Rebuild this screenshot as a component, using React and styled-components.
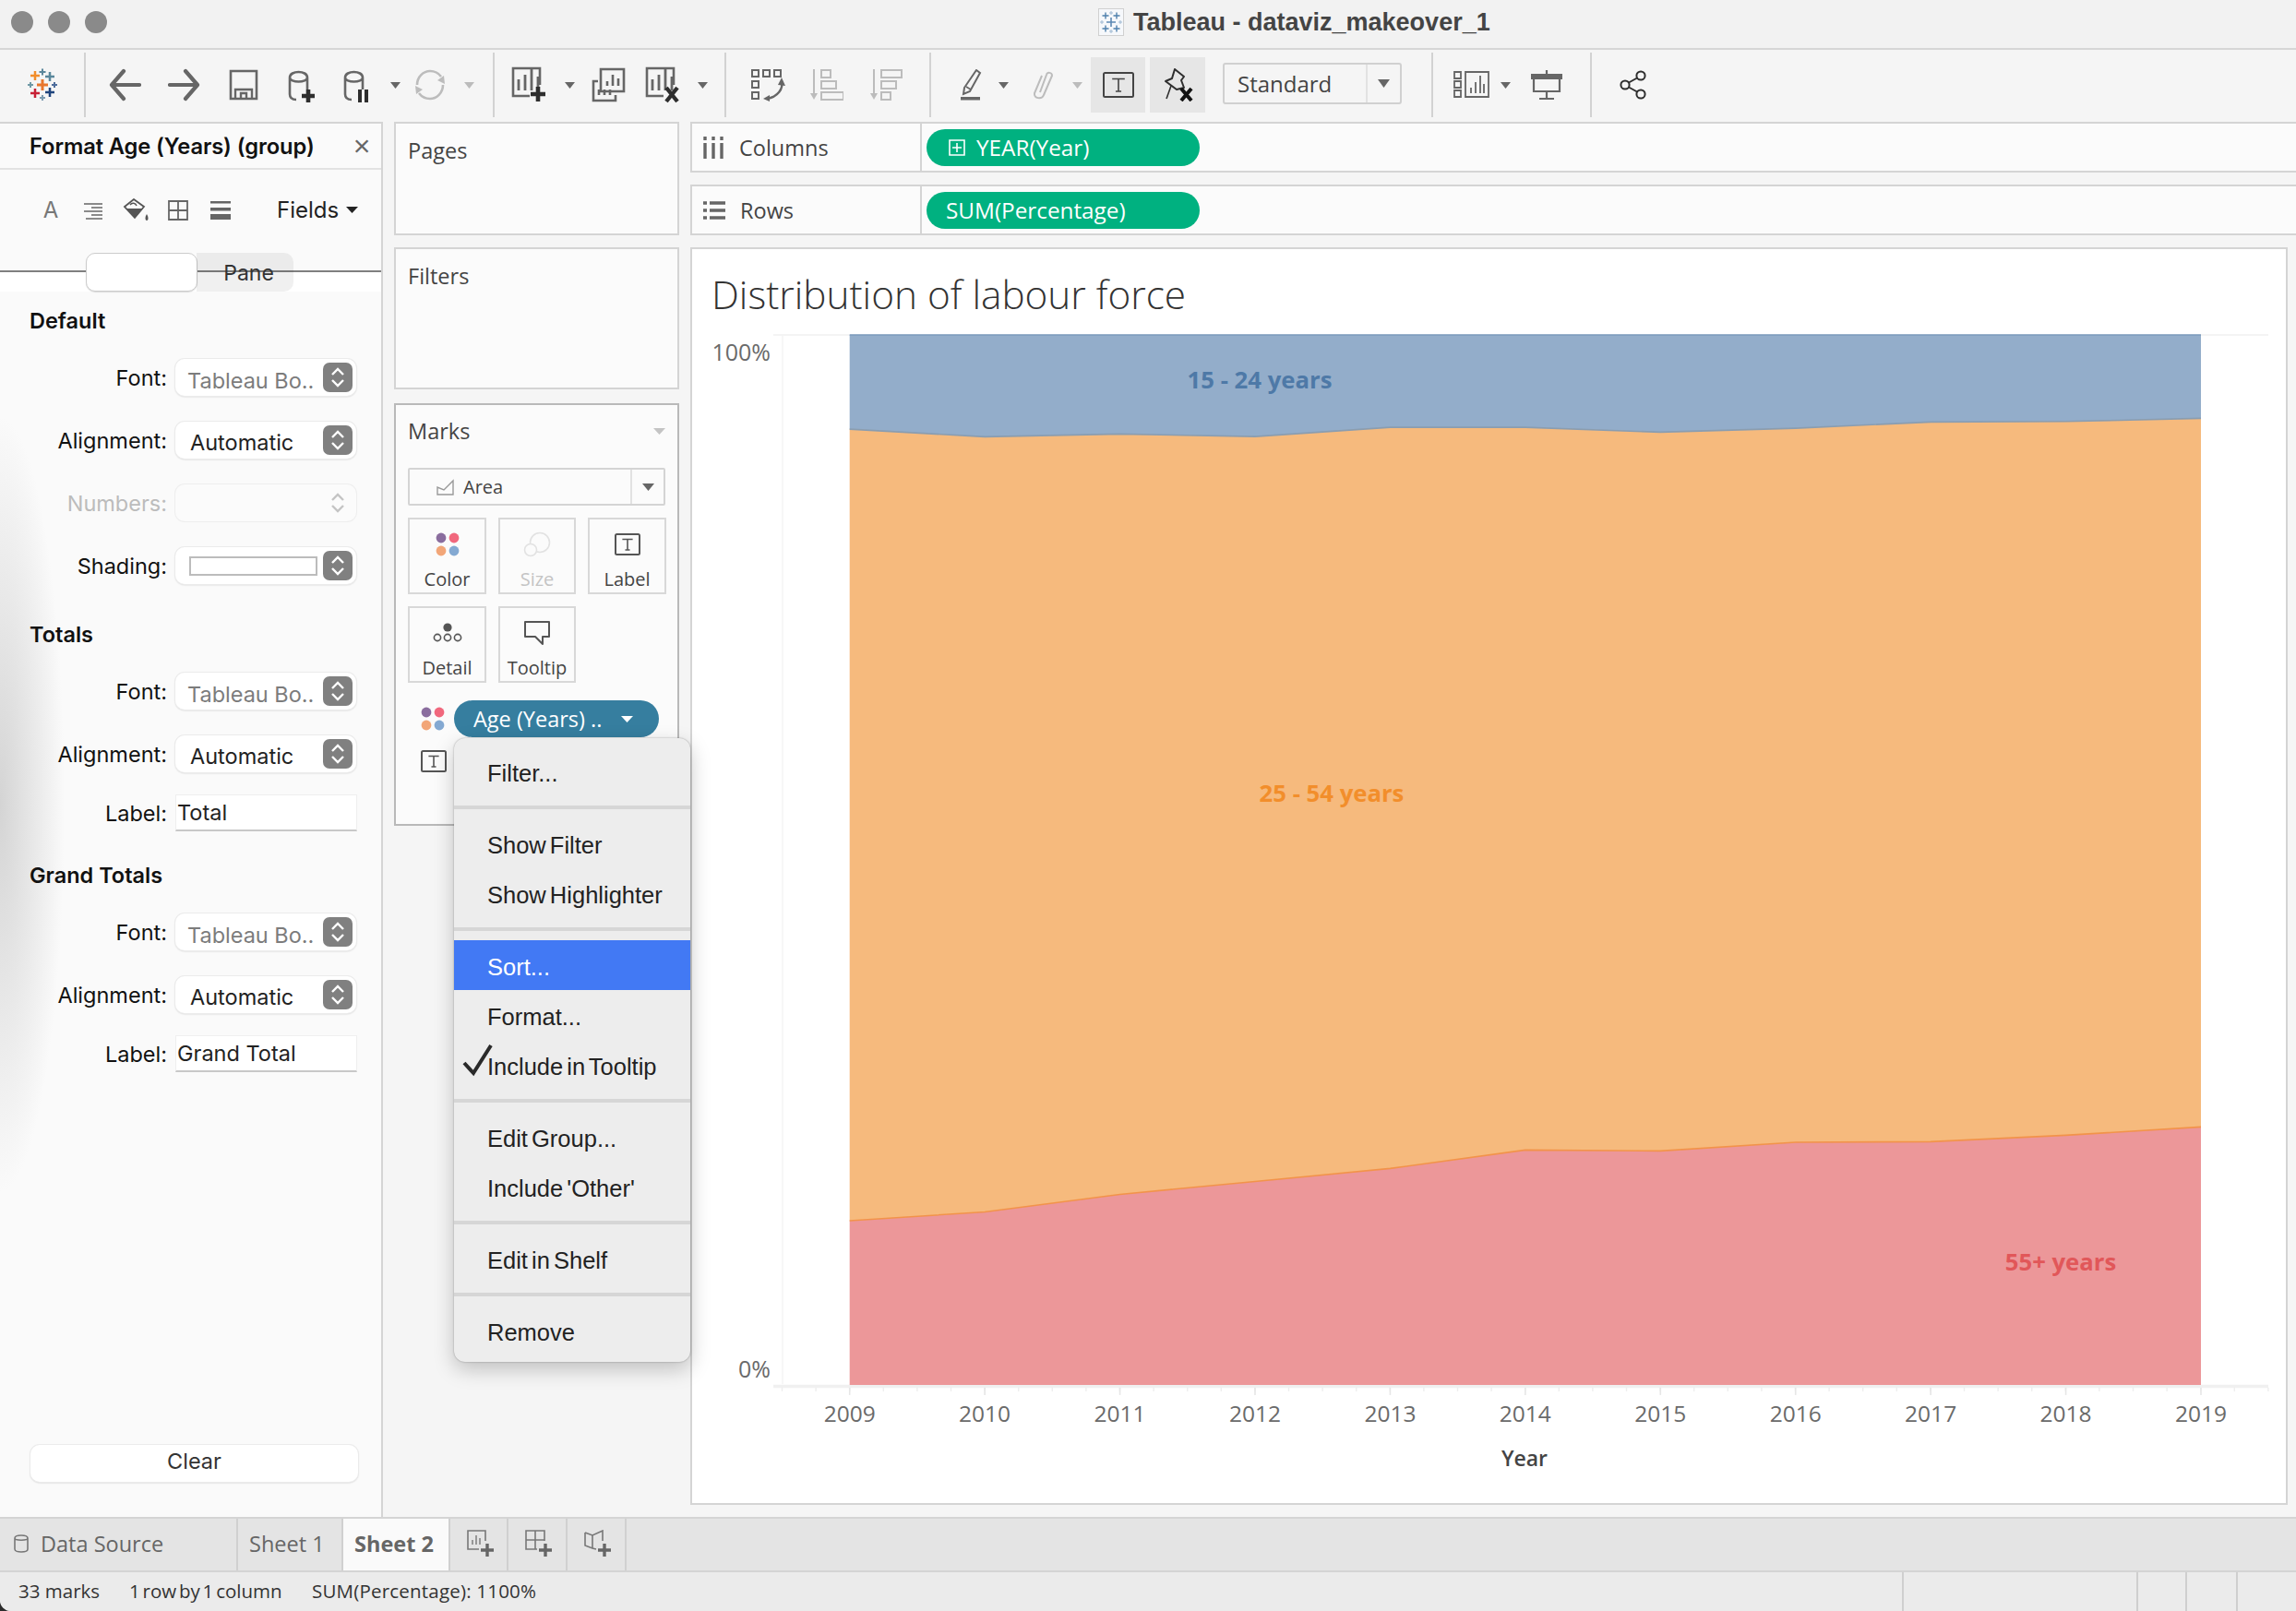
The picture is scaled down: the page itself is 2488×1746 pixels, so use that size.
import React from 'react';
import styled, { createGlobalStyle } from 'styled-components';

const UI = `'Inter', 'Liberation Sans', sans-serif`;
const TB = `'Open Sans', 'Noto Sans', sans-serif`;

const Global = createGlobalStyle`
  html, body { margin: 0; padding: 0; background: #2c2c2c; }
  * { box-sizing: border-box; }
`;
const Page = styled.div`
  width: 2488px; height: 1746px; display: flex; flex-direction: column; overflow: hidden;
  background: #f5f5f5; border-bottom-left-radius: 12px; font-family: ${TB}; color: #333;
`;
const TitleBar = styled.div`
  height: 54px; flex: none; display: flex; align-items: center; background: #f2f2f2;
  border-bottom: 2px solid #d6d6d6; padding: 0 0 4px 12px;
`;
const Light = styled.span`
  width: 24px; height: 24px; border-radius: 50%; background: #8a8a8a; margin-right: 16px; flex: none;
`;
const WindowTitle = styled.div`
  margin-left: 1058px; display: flex; align-items: center; gap: 10px;
  font: 700 27px 'Liberation Sans', sans-serif; color: #444;
`;
const Toolbar = styled.div`
  height: 78px; flex: none; display: flex; align-items: center; background: #f5f5f5; padding-bottom: 2px;
`;
const Sep = styled.div`
  width: 2px; height: 70px; background: #d2d2d2; flex: none;
`;
const Slot = styled.div`
  width: ${p => p.$w}px; height: 60px; flex: none; display: flex; align-items: center; justify-content: center;
  background: ${p => (p.$on ? '#e6e6e6' : 'transparent')};
  margin-left: ${p => p.$ml || 0}px;
`;
const StandardSelect = styled.div`
  width: 194px; height: 45px; margin: -3px 0 0 19px; flex: none; display: flex; border: 2px solid #d0d0d0; border-radius: 3px;
  font: 400 24px ${TB}; color: #444; align-items: center;
`;
const StandardValue = styled.div` flex: 1; padding-left: 14px; `;
const StandardArrow = styled.div`
  width: 37px; height: 100%; border-left: 2px solid #e2e2e2; display: flex; align-items: center; justify-content: center;
`;
const Main = styled.div`
  flex: 1; min-height: 0; display: flex; overflow: hidden;
`;
const FormatPanel = styled.aside`
  width: 415px; flex: none; display: flex; flex-direction: column; border-right: 2px solid #d4d4d4; border-top: 2px solid #d4d4d4;
  background: radial-gradient(ellipse 70px 420px at 0 738px, #d4d4d4, rgba(250,250,250,0) 100%), #fafafa;
  font-family: ${UI}; color: #111;
`;
const PanelHead = styled.div`
  height: 50px; flex: none; display: flex; align-items: center; justify-content: space-between; padding: 0 9px 0 32px;
  border-bottom: 2px solid #e2e2e2; font-size: 23.7px; font-weight: 600; letter-spacing: -.1px;
`;
const Close = styled.span`
  font: 400 32px 'Liberation Sans', sans-serif; color: #666; width: 24px; text-align: center;
`;
const FormatTools = styled.div`
  height: 90px; flex: none; display: flex; align-items: center; padding: 0 0 3px 32px;
`;
const FormatTool = styled.div`
  width: 46px; display: flex; align-items: center; justify-content: center; color: #777; font: 400 24px ${UI};
`;
const FieldsBtn = styled.div`
  margin-left: 38px; display: flex; align-items: center; gap: 8px; font: 400 24px ${UI}; color: #222;
`;
const TabRow = styled.div`
  height: 42px; flex: none; display: flex; padding-left: 93px;
  background: linear-gradient(#fafafa 0 19px, #808080 19px 21px, #fff 21px 100%);
`;
const ActiveSeg = styled.div`
  width: 121px; background: #fff; border: 1px solid #ccc; border-radius: 10px; box-shadow: 0 1px 1px rgba(0,0,0,.12);
`;
const PaneSeg = styled.div`
  width: 105px; margin-left: -1px; background: rgba(0,0,0,.06); border-radius: 0 10px 10px 0; text-align: center;
  font: 400 23px/44px ${UI}; color: #333; padding-left: 8px;
`;
const Sections = styled.div`
  flex: 1; display: flex; flex-direction: column; padding: 17px 26px 38px 32px;
`;
const SectionHead = styled.div`
  height: 30px; flex: none; margin-top: ${p => p.$mt || 0}px; margin-bottom: 26px; line-height: 30px;
  font-size: 23.5px; font-weight: 600; color: #111;
`;
const Row = styled.div`
  height: 40px; flex: none; display: flex; align-items: center; margin-bottom: ${p => p.$mb ?? 28}px;
`;
const RowLabel = styled.div`
  width: 149px; text-align: right; font-size: 23.5px; color: ${p => (p.$off ? '#bcbcbc' : '#111')}; flex: none; margin-right: 9px;
`;
const Select = styled.div`
  width: 196px; height: 40px; flex: none; display: flex; align-items: center; justify-content: space-between;
  padding: 0 4px 0 ${p => p.$pl || 17}px; border-radius: 10px; background: #fff; box-shadow: 0 0 0 1px #ebebeb, 0 1px 2px rgba(0,0,0,.22);
  ${p => p.$off && 'box-shadow: 0 0 0 1px #eee; background: #fbfbfb;'}
`;
const SelectText = styled.span`
  font-size: 23.5px; color: ${p => (p.$dim ? '#7c7c7c' : '#222')}; white-space: nowrap; padding-top: ${p => (p.$dim ? 6 : 4)}px;
  margin-left: ${p => (p.$dim ? -4 : -1)}px;
`;
const Stepper = styled.span`
  width: 32px; height: 32px; border-radius: 7px; flex: none; display: flex; align-items: center; justify-content: center;
  background: ${p => (p.$off ? 'transparent' : '#808080')};
`;
const Swatch = styled.span`
  width: 139px; height: 21px; border: 2px solid #bcbcbc; background: #fff; margin-left: -1px;
`;
const TextField = styled.div`
  width: 197px; height: 40px; flex: none; background: #fff; padding-left: 1px; line-height: 38px; font-size: 23.5px; color: #222;
  border: 1px solid #efefef; border-bottom: 2px solid #c8c8c8;
`;
const ClearBtn = styled.div`
  margin: auto 0 0 1px; height: 40px; flex: none; width: 355px; border-radius: 10px; background: #fff; text-align: center; line-height: 36px;
  font-size: 23.5px; color: #333; box-shadow: 0 0 0 1px #ebebeb, 0 1px 2px rgba(0,0,0,.25);
`;
const ShelfCol = styled.div`
  width: 309px; flex: none; margin: 0 12px 0 12px; display: flex; flex-direction: column;
`;
const Card = styled.div`
  height: ${p => p.$h}px; flex: none; background: #fbfbfb; border: 2px solid ${p => p.$dark ? '#b9b9b9' : '#d4d4d4'};
  margin-bottom: ${p => p.$mb || 0}px; padding: ${p => p.$pad || '0 13px'};
  font: 400 23.5px ${TB}; color: #444;
`;
const CardTitle = styled.div` line-height: 40px; padding-top: 9px; `;
const MarksHead = styled.div`
  display: flex; justify-content: space-between; align-items: center; height: 56px; margin-bottom: 12px;
`;
const MarkType = styled.div`
  height: 41px; width: 279px; border: 2px solid #d4d4d4; display: flex; align-items: center; font-size: 20px; color: #444; border-radius: 2px;
`;
const MarkTypeIcon = styled.span` width: 58px; display: flex; justify-content: flex-end; padding-right: 9px; `;
const MarkTypeText = styled.span` flex: 1; `;
const MarkTypeArrow = styled.span`
  width: 36px; height: 100%; border-left: 2px solid #e2e2e2; display: flex; align-items: center; justify-content: center;
`;
const MarkGrid = styled.div`
  display: grid; grid-template-columns: 85px 84px 85px; column-gap: 13px; row-gap: 13px; margin-top: 13px; width: 279px;
`;
const MarkBtn = styled.div`
  height: 83px; border: 2px solid #d8d8d8; display: flex; flex-direction: column; align-items: center; justify-content: flex-start;
  font-size: 20px; color: ${p => (p.$off ? '#c4c4c4' : '#444')}; 
`;
const MarkIcon = styled.div` height: 51px; display: flex; align-items: center; justify-content: center; padding-top: 2px;`;
const PillRow = styled.div`
  display: flex; align-items: center; margin-top: ${p => p.$mt}px; height: 40px;
`;
const PillIcon = styled.div` width: 50px; padding-left: 14px; flex: none; display: flex; align-items: center; `;
const AgePill = styled.div`
  width: 222px; height: 40px; border-radius: 20px; background: #367e9f; color: #fff; display: flex; align-items: center; justify-content: space-between;
  padding: 0 28px 0 21px; font-size: 23.5px;
`;
const ViewCol = styled.div`
  flex: 1; min-width: 0; display: flex; flex-direction: column; padding: 0 9px 13px 0;
`;
const Shelf = styled.div`
  height: 55px; flex: none; width: calc(100% + 20px); display: flex; align-items: center; border: 2px solid #d4d4d4; background: #fbfbfb; margin-bottom: 13px;
`;
const ShelfLabel = styled.div`
  width: 249px; height: 100%; flex: none; display: flex; align-items: center; gap: ${p => p.$gap}px; padding-left: 12px; border-right: 2px solid #d4d4d4;
  font: 400 23.5px ${TB}; color: #444;
`;
const GreenPill = styled.div`
  width: 296px; height: 40px; margin-left: 5px; border-radius: 20px; background: #00b180; color: #fff; display: flex; align-items: center; gap: 12px;
  padding-left: ${p => p.$pl}px; font: 400 24.3px ${TB};
`;
const ViewCard = styled.div`
  flex: 1; min-height: 0; background: #fff; border: 2px solid #d4d4d4; display: flex; flex-direction: column;
`;
const ViewTitle = styled.div`
  height: 74px; flex: none; padding: 26px 0 0 21px; font: 300 42.3px/46px ${TB}; color: #333;
`;
const ChartSvg = styled.svg`
  display: block; flex: 1; min-height: 0; width: 100%; font-family: ${TB};
`;
const Menu = styled.div`
  position: absolute; left: 492px; top: 800px; width: 256px; height: 676px; padding: 9px 0 8px; background: #ededed; border-radius: 12px;
  box-shadow: 0 0 2px rgba(0,0,0,.35), 0 8px 22px rgba(0,0,0,.22); font: 400 25.5px 'Liberation Sans', sans-serif; color: #222;
`;
const MenuItem = styled.div`
  height: 54px; padding: 5px 0 0 36px; line-height: 48px; position: relative; word-spacing: -3px; white-space: nowrap;
  background: ${p => (p.$sel ? '#4279f4' : 'transparent')}; color: ${p => (p.$sel ? '#fff' : 'inherit')};
`;
const MenuSep = styled.div` height: 4px; margin: 10px 0; background: #d6d6d6; `;
const Check = styled.svg` position: absolute; left: 9px; top: 3px; `;
const Tabs = styled.div`
  height: 60px; flex: none; display: flex; align-items: stretch; background: #e4e4e4; border-top: 2px solid #d4d4d4; border-bottom: 2px solid #d4d4d4;
  font: 400 23.5px ${TB}; color: #666;
`;
const Tab = styled.div`
  width: ${p => p.$w}px; flex: none; display: flex; align-items: center; padding: 0 0 2px ${p => p.$pl || 0}px; gap: 13px;
  justify-content: ${p => (p.$c ? 'center' : 'flex-start')}; border-right: 2px solid #d0d0d0;
  background: ${p => (p.$on ? '#fafafa' : 'transparent')}; font-weight: ${p => (p.$on ? 700 : 400)};
`;
const Status = styled.div`
  height: 42px; flex: none; display: flex; align-items: stretch; background: #ebebeb; font: 400 20.5px ${TB}; color: #333;
`;
const StatusText = styled.div`
  width: ${p => p.$w}px; flex: none; display: flex; align-items: center; padding: 0 0 2px ${p => p.$pl || 0}px; white-space: pre;
  word-spacing: ${p => p.$ws || 0}px; letter-spacing: ${p => p.$ls || 0}px;
`;
const StatusCell = styled.div`
  width: ${p => p.$w}px; flex: none; border-left: 2px solid #cfcfcf;
`;

const Ic = ({ w = 40, h = 40, children, ...r }) => (
  <svg width={w} height={h} viewBox={`0 0 ${w} ${h}`} fill="none" {...r}>{children}</svg>
);
const G = '#666', D = '#2e2e2e', L = '#bcbcbc';
const Caret = ({ c = G, w = 11, h = 7 }) => <Ic w={w} h={h}><path d={`M0 0H${w}L${w / 2} ${h}Z`} fill={c} /></Ic>;
const Cross = ({ x, y, s, c, t = 3 }) => (
  <path d={`M${x - s} ${y}H${x + s}M${x} ${y - s}V${y + s}`} stroke={c} strokeWidth={t} />
);
const Logo = () => (
  <Ic w={36} h={44}>
    <Cross x={18} y={22} s={6} c="#e8762d" t={3} />
    <Cross x={10} y={12} s={5} c="#f28e2b" t={2.5} />
    <Cross x={18} y={8} s={3.5} c="#5b879b" t={2} />
    <Cross x={26} y={13} s={5} c="#59879b" t={2.5} />
    <Cross x={5} y={22} s={3} c="#7099a6" t={2} />
    <Cross x={31} y={22} s={3} c="#4e6d9c" t={2} />
    <Cross x={10} y={31} s={5} c="#c72035" t={2.5} />
    <Cross x={26} y={30} s={5} c="#1f447d" t={2.5} />
    <Cross x={18} y={36} s={3} c="#7c9bb0" t={2} />
  </Ic>
);
const SmallLogo = () => (
  <Ic w={28} h={30}>
    <rect x=".5" y=".5" width="27" height="29" fill="#f6f8fb" stroke="#d0d0d0" />
    <Cross x={14} y={15} s={5} c="#5e89b4" t={1.6} />
    <Cross x={8} y={8} s={3.5} c="#4f80ad" t={1.4} />
    <Cross x={20} y={8} s={3.5} c="#4f80ad" t={1.4} />
    <Cross x={8} y={22} s={3.5} c="#4f80ad" t={1.4} />
    <Cross x={20} y={22} s={3.5} c="#4f80ad" t={1.4} />
    <Cross x={14} y={5} s={2} c="#9fb9d2" t={1} />
    <Cross x={14} y={25} s={2} c="#9fb9d2" t={1} />
    <Cross x={4} y={15} s={2} c="#9fb9d2" t={1} />
    <Cross x={24} y={15} s={2} c="#9fb9d2" t={1} />
  </Ic>
);
const Arrow = ({ flip }) => (
  <Ic w={36} h={36} style={flip ? { transform: 'scaleX(-1)' } : undefined}>
    <path d="M17 3L4 18L17 33M4 18H34" stroke={G} strokeWidth="4.2" strokeLinecap="round" strokeLinejoin="round" />
  </Ic>
);
const Save = () => (
  <Ic w={32} h={34}>
    <path d="M2 2H30V32H2Z" stroke={G} strokeWidth="2.6" />
    <path d="M7 32V22H25V32M13 32V26H19V32" stroke={G} strokeWidth="2.4" />
  </Ic>
);
const Cyl = () => <path d="M7 11C7 3 26 3 26 11V24M7 11C7 17 26 17 26 11M7 11V29C7 33 10 35 14 35" stroke={G} strokeWidth="2.6" />;
const DbPlus = () => (
  <Ic w={36} h={38}><Cyl /><path d="M27 24V38M20 31H34" stroke={D} strokeWidth="4.6" /></Ic>
);
const DbPause = () => (
  <Ic w={36} h={38}><Cyl /><path d="M23 24V38M30 24V38" stroke={D} strokeWidth="4" /></Ic>
);
const Refresh = () => (
  <Ic w={36} h={36}>
    <path d="M4 18C4 9 11 3 18 3C23 3 27 5 30 9M32 18C32 27 25 33 18 33C13 33 9 31 6 27" stroke={L} strokeWidth="2.6" />
    <path d="M26 13L33 8L34 17ZM10 23L3 28L2 19Z" fill={L} />
  </Ic>
);
const Bars = ({ x = 0, y = 0, c = G, k = 1 }) => (
  <path transform={`translate(${x} ${y}) scale(${k})`} d="M0 0V12M7 -5V12M14 -12V12M21 -3V12" stroke={c} strokeWidth="2.8" />
);
const NewSheet = () => (
  <Ic w={40} h={40}>
    <path d="M20 32H2V2H31V20" stroke={G} strokeWidth="2.6" />
    <Bars x={8} y={14} />
    <path d="M29 22V38M21 30H37" stroke={D} strokeWidth="4.6" />
  </Ic>
);
const DupSheet = () => (
  <Ic w={38} h={38}>
    <path d="M10 2H35V26H10Z" stroke={G} strokeWidth="2.6" />
    <path d="M7 15H2V36H26V30" stroke={G} strokeWidth="2.6" />
    <path d="M17 15V20M23 8V20M29 12V20M8 24V30M14 24V30M20 30V24" stroke={G} strokeWidth="2.6" />
  </Ic>
);
const ClearSheet = () => (
  <Ic w={40} h={40}>
    <path d="M20 32H2V2H31V20" stroke={G} strokeWidth="2.6" />
    <Bars x={8} y={14} />
    <path d="M23 23L35 38M35 23L23 38" stroke={D} strokeWidth="4.4" />
  </Ic>
);
const SwapAxes = () => (
  <Ic w={38} h={36}>
    <path d="M2 2H9V9H2ZM14 2H21V9H14ZM26 2H33V9H26ZM2 14H9V21H2ZM2 26H9V33H2Z" stroke={G} strokeWidth="2" />
    <path d="M34 14C36 22 30 31 18 33" stroke={G} strokeWidth="2.4" />
    <path d="M34 10L38 19L30 18ZM14 33L21 29L21 36Z" fill={G} />
  </Ic>
);
const SortIc = ({ desc }) => (
  <Ic w={36} h={36}>
    <path d="M4 1V30" stroke={L} strokeWidth="2" />
    <path d="M0 27H8L4 34Z" fill={L} />
    {(desc ? [[12, 22], [12, 16], [12, 10]] : [[12, 10], [12, 16], [12, 24]]).map(([x, w], i) => (
      <rect key={i} x={x} y={2 + i * 12} width={w} height={8} stroke={L} strokeWidth="2" />
    ))}
  </Ic>
);
const Highlight = () => (
  <Ic w={24} h={34}>
    <path d="M18 1L22 4L11 24L4 27L5 20Z" stroke={G} strokeWidth="2" />
    <path d="M7 19L12 22" stroke={G} strokeWidth="1.6" />
    <rect x="1" y="30" width="21" height="3.5" fill={G} />
  </Ic>
);
const Clip = () => (
  <Ic w={26} h={34}>
    <path d="M10 25L17 6C18 3 23 3 23 7L14 28C12 33 3 32 4 26L12 7" stroke={L} strokeWidth="2" />
  </Ic>
);
const TBox = ({ s = 34, h = 28, c = '#444' }) => (
  <Ic w={s} h={h}>
    <rect x="1" y="1" width={s - 2} height={h - 2} rx="1.5" stroke={c} strokeWidth="2" />
    <path d={`M${s * .3} ${h * .27}H${s * .7}M${s / 2} ${h * .27}V${h * .75}M${s * .41} ${h * .75}H${s * .59}`} stroke={c} strokeWidth="1.6" />
  </Ic>
);
const PinX = () => (
  <Ic w={36} h={36}>
    <path d="M15 1L25 9L22 13L25 21L17 23L5 14L12 11Z" stroke={D} strokeWidth="2" strokeLinejoin="round" />
    <path d="M11 19L6 33" stroke={D} strokeWidth="1.6" />
    <path d="M22 22L33 35M33 22L22 35" stroke="#111" strokeWidth="4" />
  </Ic>
);
const ShowMe = () => (
  <Ic w={40} h={30}>
    <path d="M1 1H8V8H1ZM1 11H8V18H1ZM1 21H8V28H1ZM13 1H38V28H13Z" stroke={G} strokeWidth="1.8" />
    <path d="M19 18V24M24 12V24M29 5V24M33 14V24" stroke={G} strokeWidth="1.8" />
  </Ic>
);
const Board = () => (
  <Ic w={36} h={34}>
    <rect x="1" y="5" width="34" height="6" fill={G} />
    <path d="M18 1V5M4 10V24H32V10M18 24V32M10 32H26" stroke={G} strokeWidth="2.2" />
  </Ic>
);
const Share = () => (
  <Ic w={36} h={32}>
    <circle cx="12" cy="16" r="4.6" stroke={D} strokeWidth="2" />
    <circle cx="29" cy="6" r="4.6" stroke={D} strokeWidth="2" />
    <circle cx="29" cy="26" r="4.6" stroke={D} strokeWidth="2" />
    <path d="M16 13.5L25 8.5M16 18.5L25 23.5" stroke={D} strokeWidth="2" />
  </Ic>
);
const AlignIc = () => (
  <Ic w={22} h={20}><path d="M1 3H21M9 7H21M1 11H21M9 15H21M3 19H21" stroke="#666" strokeWidth="1.5" /></Ic>
);
const Bucket = () => (
  <Ic w={30} h={26}>
    <path d="M3 9L13 1L24 9L14 21Z" stroke="#555" strokeWidth="1.8" fill="#fafafa" />
    <path d="M5 11H23L14 21Z" fill="#555" />
    <path d="M9 7C11 4 15 5 16 8" stroke="#555" strokeWidth="1.4" />
    <path d="M27 17C25 20 25 24 27 24C29 24 29 20 27 17Z" fill="#555" />
  </Ic>
);
const GridIc = () => (
  <Ic w={22} h={22}><path d="M1 1H21V21H1ZM11 1V21M1 11H21" stroke="#666" strokeWidth="1.8" /></Ic>
);
const LinesIc = () => (
  <Ic w={22} h={20}><rect y="0" width="22" height="2.5" fill="#666" /><rect y="7" width="22" height="3.5" fill="#666" /><rect y="14" width="22" height="6" fill="#666" /></Ic>
);
const Chev = ({ off }) => (
  <Ic w={16} h={24}>
    <path d="M2 9L8 3L14 9M2 15L8 21L14 15" stroke={off ? '#c4c4c4' : '#fff'} strokeWidth="2.4" fill="none" />
  </Ic>
);
const Dots = () => (
  <Ic w={26} h={26}>
    <circle cx="6" cy="6" r="5.4" fill="#8a6d9e" />
    <circle cx="20" cy="6" r="5.4" fill="#f1687d" />
    <circle cx="6" cy="20" r="5.4" fill="#f2a678" />
    <circle cx="20" cy="20" r="5.4" fill="#84a9d2" />
  </Ic>
);
const SizeIc = () => (
  <Ic w={30} h={28}>
    <circle cx="18" cy="12" r="10.5" stroke="#e2e2e2" strokeWidth="1.6" />
    <circle cx="8" cy="20" r="6.5" stroke="#e2e2e2" strokeWidth="1.6" fill="#fbfbfb" />
  </Ic>
);
const DetailIc = () => (
  <Ic w={32} h={22}>
    <circle cx="16" cy="5" r="4.6" fill="#555" />
    <circle cx="5" cy="16" r="3.6" stroke="#555" strokeWidth="1.6" />
    <circle cx="16" cy="16" r="3.6" stroke="#555" strokeWidth="1.6" />
    <circle cx="27" cy="16" r="3.6" stroke="#555" strokeWidth="1.6" />
  </Ic>
);
const TipIc = () => (
  <Ic w={30} h={28}>
    <path d="M2 2H28V18H21V26L13 18H2Z" stroke="#555" strokeWidth="2" strokeLinejoin="round" />
  </Ic>
);
const AreaIc = () => (
  <Ic w={20} h={18}><path d="M1 17V9L8 12L18 2V17Z" stroke="#999" strokeWidth="1.4" /></Ic>
);
const ColsIc = () => (
  <Ic w={22} h={24}>
    <path d="M2 0V4M11 0V4M20 0V4" stroke={G} strokeWidth="3.4" />
    <path d="M2 7V24M11 7V24M20 7V24" stroke={G} strokeWidth="3.4" />
  </Ic>
);
const RowsIc = () => (
  <Ic w={24} h={20}>
    <path d="M0 2H4M0 10H4M0 18H4" stroke={G} strokeWidth="3.4" />
    <path d="M7 2H24M7 10H24M7 18H24" stroke={G} strokeWidth="3.4" />
  </Ic>
);
const PlusBox = () => (
  <Ic w={18} h={18}><path d="M1 1H17V17H1ZM9 4V14M4 9H14" stroke="#fff" strokeWidth="1.6" /></Ic>
);
const DbSmall = () => (
  <Ic w={16} h={20}>
    <path d="M1 4C1 0 15 0 15 4V16C15 20 1 20 1 16ZM1 4C1 7 15 7 15 4" stroke="#777" strokeWidth="1.6" />
  </Ic>
);
const PlusMark = () => <path d="M26 15V29M19 22H33" stroke="#666" strokeWidth="3.4" />;
const TabSheet = () => (
  <Ic w={34} h={30}><path d="M17 21H5V1H24V12" stroke="#777" strokeWidth="1.6" /><path d="M10 16V11M14 16V6M18 16V9" stroke="#777" strokeWidth="1.4" /><PlusMark /></Ic>
);
const TabDash = () => (
  <Ic w={34} h={30}><path d="M17 21H5V1H25V12M15 1V21M5 11H25" stroke="#777" strokeWidth="1.6" /><PlusMark /></Ic>
);
const TabStory = () => (
  <Ic w={34} h={30}><path d="M5 3L13 6L24 1V12M13 6V20M17 21L13 20L5 17V3" stroke="#777" strokeWidth="1.6" /><PlusMark /></Ic>
);

const X0 = 920.7, XS = 146.43, TOP = 364, BOT = 1501;
const upper = [466, 474.3, 471.3, 474, 464, 464, 469.3, 465, 458.3, 457.7, 454.3];
const lower = [1323.3, 1313.7, 1294.7, 1280.7, 1266.7, 1246.7, 1247.7, 1238.3, 1237.7, 1230.7, 1221.7];
const xs = upper.map((_, i) => X0 + i * XS);
const pts = arr => arr.map((y, i) => `${xs[i]},${y}`).join(' ');
const revPts = arr => arr.map((y, i) => `${xs[i]},${y}`).reverse().join(' ');
const XR = xs[10];

const Chart = () => {
  const minor = [];
  for (let x = X0 - 36.6 * 2; x < 2460; x += 36.6) minor.push(x);
  return (
    <ChartSvg viewBox="750 345 1727 1284" preserveAspectRatio="none">
      <path d={`M838 ${TOP}H2458`} stroke="#f0f0f0" strokeWidth="1.5" />
      <path d="M848 364V1500" stroke="#f4f4f4" strokeWidth="1.5" />
      <path d={`M838 1502.5H2458`} stroke="#f0f0f0" strokeWidth="3.5" />
      {minor.map((x, i) => <path key={i} d={`M${x} 1504V1508`} stroke="#eeeeee" strokeWidth="1.4" />)}
      {xs.map((x, i) => <path key={i} d={`M${x} 1504V1512`} stroke="#e6e6e6" strokeWidth="1.6" />)}
      <polygon points={`${X0},${TOP} ${XR},${TOP} ${revPts(upper)}`} fill="#93adca" />
      <polygon points={`${pts(upper)} ${revPts(lower)}`} fill="#f6ba7d" />
      <polygon points={`${pts(lower)} ${XR},${BOT} ${X0},${BOT}`} fill="#ec9799" />
      <path d={`M${X0} ${TOP}H${XR}`} stroke="#7a9bbd" strokeWidth="1.5" />
      <polyline points={pts(upper)} stroke="#8a9db0" strokeWidth="1.6" fill="none" />
      <polyline points={pts(lower)} stroke="#f2934a" strokeWidth="1.6" fill="none" />
      <g fontSize="25" fill="#6a6a6a" textAnchor="end">
        <text x="835" y="392">100%</text>
        <text x="835" y="1493">0%</text>
      </g>
      <g fontSize="24.5" fill="#6a6a6a" textAnchor="middle">
        {xs.map((x, i) => <text key={i} x={x} y="1541">{2009 + i}</text>)}
      </g>
      <text x="1652" y="1589" fontSize="23" fontWeight="600" fill="#444" textAnchor="middle">Year</text>
      <g fontSize="25.7" fontWeight="700" textAnchor="middle">
        <text x="1365" y="422" fill="#4e79a7">15 - 24 years</text>
        <text x="1443" y="870" fill="#f28e2b">25 - 54 years</text>
        <text x="2233" y="1377" fill="#e15759">55+ years</text>
      </g>
    </ChartSvg>
  );
};

const SelectRow = ({ label, value, dim }) => (
  <Row>
    <RowLabel>{label}</RowLabel>
    <Select><SelectText $dim={dim}>{value}</SelectText><Stepper><Chev /></Stepper></Select>
  </Row>
);
const LabelRow = ({ value }) => (
  <Row $mb={0}>
    <RowLabel>Label:</RowLabel>
    <TextField>{value}</TextField>
  </Row>
);

export default function App() {
  return (
    <Page>
      <Global />
      <TitleBar>
        <Light /><Light /><Light />
        <WindowTitle><SmallLogo />Tableau - dataviz_makeover_1</WindowTitle>
      </TitleBar>
      <Toolbar>
        <Slot $w={91}><Logo /></Slot>
        <Sep />
        <Slot $w={64} $ml={10}><Arrow /></Slot>
        <Slot $w={64} $ml={1}><Arrow flip /></Slot>
        <Slot $w={63}><Save /></Slot>
        <Slot $w={60}><DbPlus /></Slot>
        <Slot $w={60}><DbPause /></Slot>
        <Slot $w={26}><Caret /></Slot>
        <Slot $w={50}><Refresh /></Slot>
        <Slot $w={34}><Caret c={L} /></Slot>
        <Slot $w={9} />
        <Sep />
        <Slot $w={64} $ml={6}><NewSheet /></Slot>
        <Slot $w={22}><Caret /></Slot>
        <Slot $w={64}><DupSheet /></Slot>
        <Slot $w={54}><ClearSheet /></Slot>
        <Slot $w={30}><Caret /></Slot>
        <Slot $w={9} />
        <Sep />
        <Slot $w={64} $ml={13}><SwapAxes /></Slot>
        <Slot $w={64}><SortIc /></Slot>
        <Slot $w={65}><SortIc desc /></Slot>
        <Slot $w={14} />
        <Sep />
        <Slot $w={56} $ml={15}><Highlight /></Slot>
        <Slot $w={14}><Caret /></Slot>
        <Slot $w={56} $ml={8}><Clip /></Slot>
        <Slot $w={18}><Caret c={L} /></Slot>
        <Slot $w={59} $ml={6} $on><TBox /></Slot>
        <Slot $w={60} $ml={5} $on><PinX /></Slot>
        <StandardSelect>
          <StandardValue>Standard</StandardValue>
          <StandardArrow><Caret w={13} h={9} /></StandardArrow>
        </StandardSelect>
        <Slot $w={32} />
        <Sep />
        <Slot $w={64} $ml={10}><ShowMe /></Slot>
        <Slot $w={20} $ml={-6}><Caret /></Slot>
        <Slot $w={50} $ml={10}><Board /></Slot>
        <Slot $w={22} />
        <Sep />
        <Slot $w={64} $ml={10}><Share /></Slot>
      </Toolbar>
      <Main>
        <FormatPanel>
          <PanelHead>Format Age (Years) (group)<Close>×</Close></PanelHead>
          <FormatTools>
            <FormatTool>A</FormatTool>
            <FormatTool><AlignIc /></FormatTool>
            <FormatTool><Bucket /></FormatTool>
            <FormatTool><GridIc /></FormatTool>
            <FormatTool><LinesIc /></FormatTool>
            <FieldsBtn>Fields <Caret c="#222" w={13} h={7} /></FieldsBtn>
          </FormatTools>
          <TabRow><ActiveSeg /><PaneSeg>Pane</PaneSeg></TabRow>
          <Sections>
            <SectionHead>Default</SectionHead>
            <SelectRow label="Font:" value="Tableau Bo.." dim />
            <SelectRow label="Alignment:" value="Automatic" />
            <Row>
              <RowLabel $off>Numbers:</RowLabel>
              <Select $off><span /><Stepper $off><Chev off /></Stepper></Select>
            </Row>
            <Row $mb={0}>
              <RowLabel>Shading:</RowLabel>
              <Select $pl={16}><Swatch /><Stepper><Chev /></Stepper></Select>
            </Row>
            <SectionHead $mt={40}>Totals</SectionHead>
            <SelectRow label="Font:" value="Tableau Bo.." dim />
            <Row $mb={24}>
              <RowLabel>Alignment:</RowLabel>
              <Select><SelectText>Automatic</SelectText><Stepper><Chev /></Stepper></Select>
            </Row>
            <LabelRow value="Total" />
            <SectionHead $mt={33}>Grand Totals</SectionHead>
            <SelectRow label="Font:" value="Tableau Bo.." dim />
            <Row $mb={24}>
              <RowLabel>Alignment:</RowLabel>
              <Select><SelectText>Automatic</SelectText><Stepper><Chev /></Stepper></Select>
            </Row>
            <LabelRow value="Grand Total" />
            <ClearBtn>Clear</ClearBtn>
          </Sections>
        </FormatPanel>
        <ShelfCol>
          <Card $h={123} $mb={13}><CardTitle>Pages</CardTitle></Card>
          <Card $h={154} $mb={15}><CardTitle>Filters</CardTitle></Card>
          <Card $h={458} $dark>
            <MarksHead>Marks<Caret c="#c4c4c4" w={13} h={7} /></MarksHead>
            <MarkType>
              <MarkTypeIcon><AreaIc /></MarkTypeIcon>
              <MarkTypeText>Area</MarkTypeText>
              <MarkTypeArrow><Caret w={13} h={8} /></MarkTypeArrow>
            </MarkType>
            <MarkGrid>
              <MarkBtn><MarkIcon><Dots /></MarkIcon>Color</MarkBtn>
              <MarkBtn $off><MarkIcon><SizeIc /></MarkIcon>Size</MarkBtn>
              <MarkBtn><MarkIcon><TBox s={28} h={24} c="#555" /></MarkIcon>Label</MarkBtn>
              <MarkBtn><MarkIcon><DetailIc /></MarkIcon>Detail</MarkBtn>
              <MarkBtn><MarkIcon><TipIc /></MarkIcon>Tooltip</MarkBtn>
            </MarkGrid>
            <PillRow $mt={19}>
              <PillIcon><Dots /></PillIcon>
              <AgePill>Age (Years) .. <Caret c="#fff" w={13} h={7} /></AgePill>
            </PillRow>
            <PillRow $mt={6}>
              <PillIcon><TBox s={28} h={24} c="#555" /></PillIcon>
            </PillRow>
          </Card>
        </ShelfCol>
        <ViewCol>
          <Shelf>
            <ShelfLabel $gap={17}><ColsIc />Columns</ShelfLabel>
            <GreenPill $pl={24}><PlusBox />YEAR(Year)</GreenPill>
          </Shelf>
          <Shelf>
            <ShelfLabel $gap={16}><RowsIc />Rows</ShelfLabel>
            <GreenPill $pl={21}>SUM(Percentage)</GreenPill>
          </Shelf>
          <ViewCard>
            <ViewTitle>Distribution of labour force</ViewTitle>
            <Chart />
          </ViewCard>
        </ViewCol>
      </Main>
      <Tabs>
        <Tab $w={258} $pl={15}><DbSmall />Data Source</Tab>
        <Tab $w={114} $pl={12}>Sheet 1</Tab>
        <Tab $w={116} $pl={12} $on>Sheet 2</Tab>
        <Tab $w={63} $c><TabSheet /></Tab>
        <Tab $w={64} $c><TabDash /></Tab>
        <Tab $w={64} $c><TabStory /></Tab>
      </Tabs>
      <Status>
        <StatusText $w={140} $pl={20}>33 marks</StatusText>
        <StatusText $w={198} $ws={-2.5}>1 row by 1 column</StatusText>
        <StatusText $w={1723} $ls={.2}>SUM(Percentage): 1100%</StatusText>
        <StatusCell $w={254} />
        <StatusCell $w={53} />
        <StatusCell $w={55} />
        <StatusCell $w={65} />
      </Status>
      <Menu>
        <MenuItem>Filter...</MenuItem>
        <MenuSep />
        <MenuItem>Show Filter</MenuItem>
        <MenuItem>Show Highlighter</MenuItem>
        <MenuSep />
        <MenuItem $sel>Sort...</MenuItem>
        <MenuItem>Format...</MenuItem>
        <MenuItem>
          <Check width="36" height="40" viewBox="0 0 36 40" fill="none"><path d="M2 22L12 33L31 3" stroke="#2a2a2a" strokeWidth="4" /></Check>
          Include in Tooltip
        </MenuItem>
        <MenuSep />
        <MenuItem>Edit Group...</MenuItem>
        <MenuItem>Include 'Other'</MenuItem>
        <MenuSep />
        <MenuItem>Edit in Shelf</MenuItem>
        <MenuSep />
        <MenuItem>Remove</MenuItem>
      </Menu>
    </Page>
  );
}
